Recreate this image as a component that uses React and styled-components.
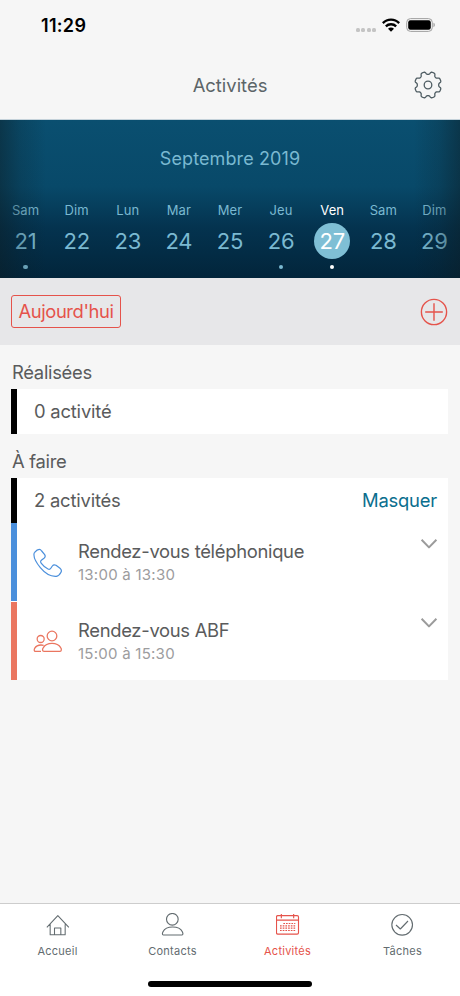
import React from "react";
import styled, { createGlobalStyle } from "styled-components";

const days = [
	{ name: "Sam", number: 21, hasEvent: true },
	{ name: "Dim", number: 22 },
	{ name: "Lun", number: 23 },
	{ name: "Mar", number: 24 },
	{ name: "Mer", number: 25 },
	{ name: "Jeu", number: 26, hasEvent: true },
	{ name: "Ven", number: 27, hasEvent: true, selected: true },
	{ name: "Sam", number: 28 },
	{ name: "Dim", number: 29 },
];

// eight rounded teeth around the centre
const gearPath = () => {
	const points = [];
	for (let i = 0; i < 192; i++) {
		const angle = (i / 192) * Math.PI * 2;
		const wave = -Math.cos(angle * 8);
		const radius = 12 + 1.4 * Math.tanh(2 * (wave + 0.15));
		const x = (15 + radius * Math.cos(angle)).toFixed(2);
		const y = (15 + radius * Math.sin(angle)).toFixed(2);
		points.push(`${x} ${y}`);
	}
	return `M${points.join("L")}Z`;
};

const GearIcon = () => (
	<Icon $width={30} $height={30} $stroke={1.3} viewBox="0 0 30 30">
		<path d={gearPath()} />
		<circle cx="15" cy="15" r="3.8" />
	</Icon>
);

const WifiIcon = () => (
	<svg width="18" height="14" viewBox="0 0 54 42">
		<g fill="none" stroke="#000" strokeWidth="7">
			<path d="M2.5 15.5C16 1.5 38 1.5 51.5 15.5" />
			<path d="M11.5 25C20 16.5 34 16.5 42.5 25" />
		</g>
		<path d="M18 32C23 27 31 27 36 32L27 41Z" fill="#000" />
	</svg>
);

const BatteryIcon = () => (
	<svg width="30" height="14" viewBox="0 0 30 14">
		<rect
			x="0.7"
			y="0.6"
			width="25.6"
			height="12.8"
			rx="3.8"
			fill="none"
			stroke="#a0a0a0"
		/>
		<rect x="2.2" y="2.2" width="22.6" height="9.6" rx="2.2" fill="#000" />
		<path d="M27.5 4.8C29.2 5.4 29.2 8.6 27.5 9.2Z" fill="#999" />
	</svg>
);

const PlusIcon = () => (
	<Icon $width={28} $height={28} $stroke={1.4} viewBox="0 0 28 28">
		<circle cx="14" cy="14" r="12.6" />
		<path d="M5.2 14H22.8M14 5.2V22.8" />
	</Icon>
);

const PhoneIcon = () => (
	<Icon $width={30} $height={30} $stroke={3.6} viewBox="0 0 90 90">
		<path d="M5 13C9 8 14 4 19 4C22 4 24 6 26 9L35 20C38 25 37 28 33 31L26 36C22 39 22 42 25 46C31 54 38 60 45 63C49 65 52 63 54 60L58 54C61 50 65 50 69 52L81 61C86 65 86 69 84 73C81 79 77 84 70 85C55 86 36 76 22 59C9 43 2 26 3 18C3 16 4 14 5 13Z" />
	</Icon>
);

const PeopleIcon = () => (
	<Icon $width={30} $height={25} $stroke={3.8} viewBox="0 0 90 75">
		<circle cx="57" cy="21" r="14.5" />
		<path d="M33 67C27 67 28 60 31 56C36 47 46 43 57 43S78 47 83 56C86 60 86 67 81 67Z" />
		<circle cx="23" cy="30" r="10.5" />
		<path d="M24 67H7C3 67 3 62 5 58C9 51 16 48 24 48C28 48 30 48.5 32 49" />
	</Icon>
);

const ChevronIcon = () => (
	<Icon $width={18} $height={12} $stroke={2} viewBox="0 0 18 12">
		<path d="M1.6 1.8L9 9.4L16.4 1.8" />
	</Icon>
);

const HomeIcon = () => (
	<Icon $width={24} $height={24} $stroke={3.2} viewBox="137.5 52 72 72">
		<path d="M140 95L173 60L206 95M150 86V117H195V86M163 117V97H182V117" />
	</Icon>
);

const ContactIcon = () => (
	<Icon $width={24} $height={24} $stroke={3.4} viewBox="482 52 72 72">
		<circle cx="516" cy="71" r="17.5" />
		<path d="M489 118C485 118 486 112 488 108C493 98 504 94 517 94S541 98 546 108C548 112 549 118 545 118Z" />
	</Icon>
);

const CalendarIcon = () => (
	<Icon $width={24} $height={24} $stroke={3.4} viewBox="138 52 72 72">
		<rect x="139.5" y="60" width="66" height="55.5" rx="4" />
		<path d="M140 73.5H205M154 55V68M191 55V68" />
		<path
			d="M160 83.5H196M150 90.5H196M150 97.5H196M150 104.5H196"
			strokeDasharray="5 3.1"
			strokeWidth="3.6"
		/>
	</Icon>
);

const CheckIcon = () => (
	<Icon $width={24} $height={24} $stroke={3.4} viewBox="482 52 72 72">
		<circle cx="515.5" cy="87.5" r="31" />
		<path d="M497 88L510 100L533 76" />
	</Icon>
);

const activities = [
	{
		title: "Rendez-vous téléphonique",
		time: "13:00 à 13:30",
		color: "#4a8fdc",
		icon: <PhoneIcon />,
	},
	{
		title: "Rendez-vous ABF",
		time: "15:00 à 15:30",
		color: "#ea7660",
		icon: <PeopleIcon />,
	},
];

const tabs = [
	{ label: "Accueil", icon: <HomeIcon /> },
	{ label: "Contacts", icon: <ContactIcon /> },
	{ label: "Activités", icon: <CalendarIcon />, active: true },
	{ label: "Tâches", icon: <CheckIcon /> },
];

const App = () => {
	return (
		<Screen>
			<GlobalStyle />
			<StatusBar>
				<Clock>11:29</Clock>
				<StatusIcons>
					<Signal>
						<i />
						<i />
						<i />
						<i />
					</Signal>
					<WifiIcon />
					<BatteryIcon />
				</StatusIcons>
			</StatusBar>
			<Header>
				<Title>Activités</Title>
				<SettingsButton aria-label="Paramètres">
					<GearIcon />
				</SettingsButton>
			</Header>
			<Calendar>
				<Month>Septembre 2019</Month>
				<Week>
					{days.map((day) => (
						<Day key={day.number} $selected={day.selected}>
							<DayName>{day.name}</DayName>
							<DayNumber $selected={day.selected}>{day.number}</DayNumber>
							<Dot $visible={day.hasEvent} />
						</Day>
					))}
				</Week>
			</Calendar>
			<Toolbar>
				<TodayButton>Aujourd'hui</TodayButton>
				<AddButton aria-label="Ajouter">
					<PlusIcon />
				</AddButton>
			</Toolbar>
			<Content>
				<SectionTitle>Réalisées</SectionTitle>
				<Card>
					<Summary>0 activité</Summary>
				</Card>
				<SectionTitle>À faire</SectionTitle>
				<Card>
					<Summary>
						2 activités
						<HideButton>Masquer</HideButton>
					</Summary>
					{activities.map((activity) => (
						<Activity key={activity.title} $color={activity.color}>
							<ActivityIcon $color={activity.color}>
								{activity.icon}
							</ActivityIcon>
							<ActivityText>
								<ActivityTitle>{activity.title}</ActivityTitle>
								<ActivityTime>{activity.time}</ActivityTime>
							</ActivityText>
							<Expand>
								<ChevronIcon />
							</Expand>
						</Activity>
					))}
				</Card>
			</Content>
			<TabBar>
				{tabs.map((tab) => (
					<Tab key={tab.label} $active={tab.active}>
						{tab.icon}
						<span>{tab.label}</span>
					</Tab>
				))}
			</TabBar>
			<HomeArea>
				<HomeIndicator />
			</HomeArea>
		</Screen>
	);
};

const GlobalStyle = createGlobalStyle`
	* {
		box-sizing: border-box;
	}

	body {
		margin: 0;
		font-family: Inter, "Liberation Sans", sans-serif;
		background-color: #f6f6f6;
	}

	button {
		padding: 0;
		border: none;
		background: none;
		font: inherit;
		letter-spacing: inherit;
		color: inherit;
	}
`;

const Icon = styled.svg`
	display: block;
	flex: none;
	width: ${({ $width }) => $width}px;
	height: ${({ $height }) => $height}px;
	fill: none;
	stroke: currentColor;
	stroke-width: ${({ $stroke }) => $stroke};
	stroke-linejoin: round;
`;

const Screen = styled.div`
	display: flex;
	flex-direction: column;
	width: 460px;
	height: 996px;
	overflow: hidden;
	background-color: #f6f6f6;
	color: #5a5b5c;
`;

const StatusBar = styled.div`
	display: flex;
	justify-content: space-between;
	align-items: center;
	height: 50px;
	padding: 0 24px 0 41px;
`;

const Clock = styled.div`
	padding-top: 1px;
	font-size: 18px;
	font-weight: 600;
	letter-spacing: 0.3px;
	color: #000;
`;

const StatusIcons = styled.div`
	display: flex;
	align-items: center;
	gap: 6px;
`;

const Signal = styled.div`
	display: flex;
	gap: 1.5px;
	padding-top: 10px;

	i {
		width: 4px;
		height: 4px;
		border-radius: 1.5px;
		background-color: #c4c4c4;
	}
`;

const Header = styled.header`
	display: grid;
	grid-template-columns: 60px 1fr 60px;
	align-items: center;
	height: 70px;
	border-bottom: 1px solid #c5d2da;
`;

const Title = styled.h1`
	grid-column: 2;
	margin: 0;
	font-size: 18.4px;
	font-weight: 400;
	text-align: center;
	color: #5c6568;
`;

const SettingsButton = styled.button`
	justify-self: start;
	padding-left: 13px;
	color: #4f5d63;
`;

const Calendar = styled.section`
	position: relative;
	height: 158px;
	padding-top: 27px;
	background: linear-gradient(#0a4f70, #084969 42%, #04334f 68%, #02253b);
	color: #7ab9d1;

	/* dark fade over both edges */
	&::after {
		content: "";
		position: absolute;
		inset: 0;
		pointer-events: none;
		background: linear-gradient(
			90deg,
			rgba(12, 30, 38, 0.5),
			rgba(12, 30, 38, 0.2) 4.5%,
			transparent 10%,
			transparent 90%,
			rgba(12, 30, 38, 0.2) 95.5%,
			rgba(12, 30, 38, 0.5)
		);
	}
`;

const Month = styled.div`
	height: 24px;
	font-size: 18px;
	line-height: 24px;
	letter-spacing: 0.1px;
	text-align: center;
`;

const Week = styled.div`
	display: grid;
	grid-template-columns: repeat(9, 1fr);
	margin-top: 30px;
`;

const Day = styled.div`
	display: flex;
	flex-direction: column;
	align-items: center;
	color: ${({ $selected }) => ($selected ? "#fff" : "inherit")};
`;

const DayName = styled.div`
	font-size: 13px;
	line-height: 18px;
	letter-spacing: 0.1px;
`;

const DayNumber = styled.div`
	width: 36px;
	height: 36px;
	margin-top: 4px;
	border-radius: 50%;
	font-size: 22px;
	line-height: 36px;
	letter-spacing: -0.2px;
	text-align: center;
	background-color: ${({ $selected }) =>
		$selected ? "#7fbfd5" : "transparent"};
`;

const Dot = styled.div`
	width: 4.5px;
	height: 4.5px;
	margin-top: 5.5px;
	border-radius: 50%;
	background-color: ${({ $visible }) =>
		$visible ? "currentColor" : "transparent"};
`;

const Toolbar = styled.div`
	display: flex;
	justify-content: space-between;
	align-items: center;
	height: 66.6px;
	padding: 0 12px 0 11px;
	background-color: #e7e7e9;
	color: #e5534b;
`;

const TodayButton = styled.button`
	width: 110px;
	height: 33px;
	border: 1.5px solid #e5534b;
	border-radius: 3px;
	font-size: 18.4px;
	letter-spacing: -0.4px;
`;

const AddButton = styled.button`
	padding-top: 2px;
`;

const Content = styled.main`
	flex: 1;
	padding: 0 12px 0 11px;
	letter-spacing: -0.3px;
`;

const SectionTitle = styled.h2`
	height: 44.5px;
	margin: 0;
	padding-top: 11px;
	padding-left: 1px;
	font-size: 18.4px;
	font-weight: 400;
	line-height: 32px;
`;

const Card = styled.div`
	background-color: #fff;
`;

const Summary = styled.div`
	display: flex;
	justify-content: space-between;
	align-items: center;
	height: 44.5px;
	padding: 0 11px 0 17px;
	border-left: 6px solid #000;
	font-size: 18.4px;
	letter-spacing: -0.2px;
`;

const HideButton = styled.button`
	color: #0a6e8e;
`;

const Activity = styled.div`
	display: flex;
	height: 78px;
	border-left: 6px solid ${({ $color }) => $color};

	& + & {
		margin-top: 1px;
	}
`;

const ActivityIcon = styled.div`
	display: flex;
	align-items: center;
	width: 61px;
	padding-left: 15.5px;
	padding-top: 2px;
	color: ${({ $color }) => $color};
`;

const ActivityText = styled.div`
	flex: 1;
	padding-top: 16px;
`;

const ActivityTitle = styled.div`
	font-size: 18.4px;
	line-height: 25px;
`;

const ActivityTime = styled.div`
	font-size: 15px;
	line-height: 21px;
	letter-spacing: 0.25px;
	color: #9c9c9e;
`;

const Expand = styled.button`
	align-self: flex-start;
	margin: 15px 10px 0 0;
	color: #9b9b9b;
`;

const TabBar = styled.nav`
	display: grid;
	grid-template-columns: repeat(4, 1fr);
	height: 62px;
	padding-top: 9px;
	border-top: 1px solid #cdcdcd;
	background-color: #fff;
`;

const Tab = styled.div`
	display: flex;
	flex-direction: column;
	align-items: center;
	gap: 7px;
	font-size: 11px;
	line-height: 15px;
	letter-spacing: 0.25px;
	color: ${({ $active }) => ($active ? "#e5534b" : "#636c70")};
`;

const HomeArea = styled.div`
	display: flex;
	justify-content: center;
	align-items: flex-start;
	height: 31px;
	padding-top: 16px;
	background-color: #fff;
`;

const HomeIndicator = styled.div`
	width: 164px;
	height: 5.5px;
	border-radius: 3px;
	background-color: #000;
`;

export default App;
